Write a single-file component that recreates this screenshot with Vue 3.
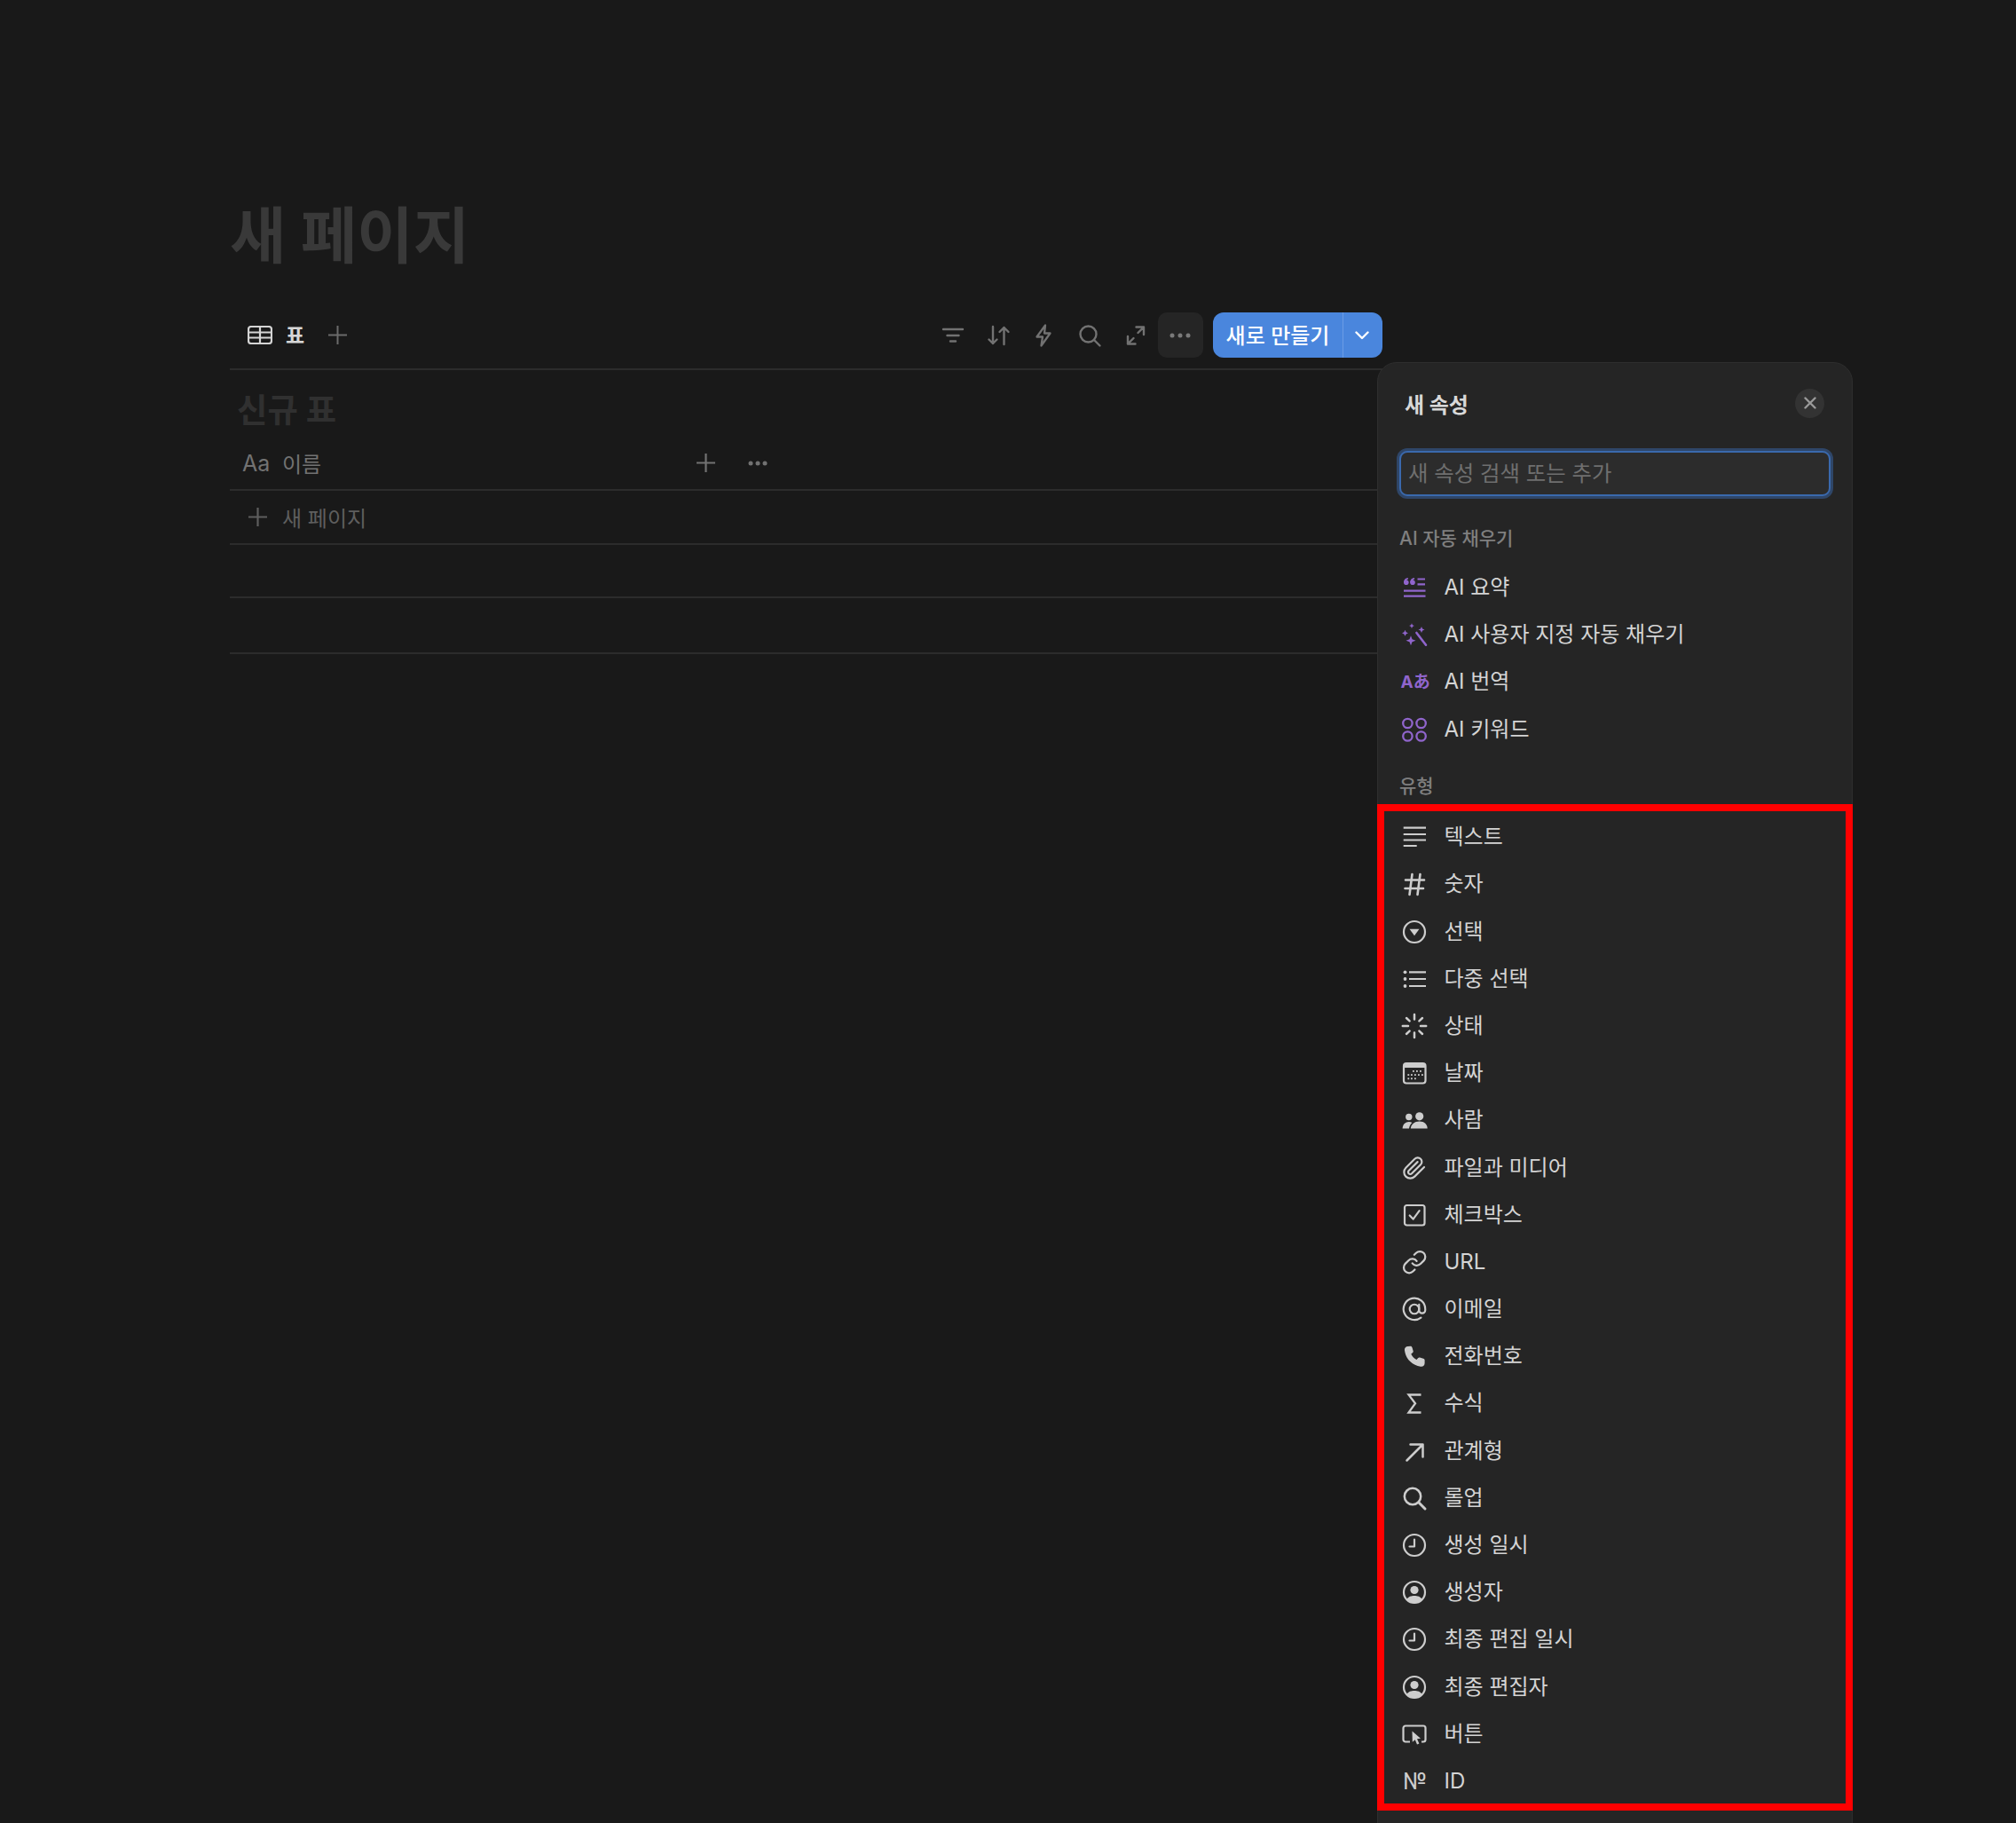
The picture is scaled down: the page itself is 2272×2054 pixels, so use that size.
<script setup>
const S = 'fill="none" stroke="currentColor" stroke-width="2.2" stroke-linecap="round" stroke-linejoin="round"'
const clock = `<g ${S}><circle cx="14" cy="14" r="12"/><path d="M14 7.5V15.5H8.5"/></g>`
const person = `<g fill="none" stroke="currentColor" stroke-width="2.2"><circle cx="14" cy="14" r="12"/></g><circle cx="14" cy="11.5" r="4.6" fill="currentColor"/><path d="M5 22.5C7 18.8 10.5 18 14 18s7 .8 9 4.5A12.5 12.5 0 0 1 5 22.5Z" fill="currentColor"/>`
const icons = {
  summary: `<g fill="currentColor"><circle cx="4.8" cy="8.2" r="2.8"/><circle cx="12" cy="8.2" r="2.8"/><path d="M2 8.200C2 5.200 3.800 3.300 6.800 3L7 4.600C5.400 5 4.800 6.300 4.800 8.200ZM9.200 8.200C9.200 5.200 11 3.300 14 3L14.200 4.600C12.600 5 12 6.300 12 8.200Z"/></g><path d="M17.500 4.500H26M17.500 10.300H26M2 17.700H26.500M2 23.700H26.500" fill="none" stroke="currentColor" stroke-width="2.200"/>`,
  wand: `<g fill="currentColor"><path d="M11 1.200l.9 2 2 .9-2 .9-.9 2-.9-2-2-.9 2-.9Z"/><path d="M22 5l1.100 2.400 2.400 1.100-2.400 1.100-1.100 2.400-1.100-2.400-2.400-1.100 2.400-1.100Z"/><path d="M3.500 8.800l1.100 2.400 2.400 1.100-2.400 1.100-1.100 2.400-1.100-2.400-2.400-1.100 2.400-1.100Z"/><path d="M10 15.200l1.500 4 4 1.500-4 1.500-1.500 4-1.500-4-4-1.500 4-1.500Z"/></g><path d="M16.400 12L27 25.700" fill="none" stroke="currentColor" stroke-width="2.600" stroke-linecap="round"/>`,
  translate: `<text x="-1.500" y="20.500" fill="currentColor" font-size="19" font-weight="700" font-family="Inter, 'Noto Sans CJK JP', sans-serif">Aあ</text>`,
  keywords: `<g fill="none" stroke="currentColor" stroke-width="2.300"><circle cx="6.400" cy="7" r="5.200"/><circle cx="21.600" cy="7" r="5.200"/><circle cx="6.400" cy="21.500" r="5.200"/><circle cx="21.600" cy="21.500" r="5.200"/></g>`,
  text: `<path d="M1.700 3.700H27M1.700 11H27M1.700 17.500H27M1.700 24H16.700" fill="none" stroke="currentColor" stroke-width="2.200"/>`,
  number: `<path d="M11.500 3L8.500 26M20.500 3L17.500 26M4 9.500H25M3.500 19H24" fill="none" stroke="currentColor" stroke-width="2.600" stroke-linecap="round"/>`,
  select: `<circle cx="14" cy="14" r="12" fill="none" stroke="currentColor" stroke-width="2.200"/><path d="M8.500 10.800H19.500L14 18.200Z" fill="currentColor"/>`,
  multi: `<g fill="currentColor"><circle cx="3.500" cy="6.300" r="1.900"/><circle cx="3.500" cy="14" r="1.900"/><circle cx="3.500" cy="22" r="1.900"/></g><path d="M8 6.300H27M8 14H27M8 22H27" fill="none" stroke="currentColor" stroke-width="2.200"/>`,
  status: `<path d="M14 1V6.500M14 21.500V27M.8 14H7M21 14H27.200M5 5L8.600 8.400M19.400 19.600L23 23M23 5L19.400 8.400M8.600 19.600L5 23" fill="none" stroke="currentColor" stroke-width="2.500" stroke-linecap="round"/>`,
  date: `<rect x="2" y="3" width="24.500" height="22.500" rx="3" fill="none" stroke="currentColor" stroke-width="2.200"/><path d="M4 3H24.500A2 2 0 0 1 26.500 5V8H2V5A2 2 0 0 1 4 3Z" fill="currentColor"/><g fill="currentColor"><rect x="12" y="11" width="1.800" height="1.800"/><rect x="16" y="11" width="1.800" height="1.800"/><rect x="20" y="11" width="1.800" height="1.800"/><rect x="6.400" y="15.200" width="1.800" height="1.800"/><rect x="10" y="15.200" width="1.800" height="1.800"/><rect x="14" y="15.200" width="1.800" height="1.800"/><rect x="18" y="15.200" width="1.800" height="1.800"/><rect x="22" y="15.200" width="1.800" height="1.800"/><rect x="6.400" y="19.400" width="1.800" height="1.800"/><rect x="10" y="19.400" width="1.800" height="1.800"/><rect x="14" y="19.400" width="1.800" height="1.800"/></g>`,
  people: `<g fill="currentColor"><circle cx="7.800" cy="10.500" r="3.700"/><circle cx="19.700" cy="9.800" r="4.600"/><path d="M.6 23.600C.8 18.800 4 16 7.800 16c1.500 0 2.700.3 3.700 1-2 1.600-3.200 3.900-3.500 6.600Z"/><path d="M9.800 23.600c.4-4.700 4.300-8 9.900-8s8.800 3.300 9 8Z"/></g>`,
  file: `<g transform="scale(1.167)"><path d="m21.440 11.050-9.190 9.190a6 6 0 0 1-8.490-8.490l8.570-8.570A4 4 0 1 1 18 8.840l-8.590 8.570a2 2 0 0 1-2.830-2.830l8.490-8.480" fill="none" stroke="currentColor" stroke-width="1.850" stroke-linecap="round" stroke-linejoin="round"/></g>`,
  check: `<rect x="3" y="3" width="22.500" height="22.500" rx="2.500" fill="none" stroke="currentColor" stroke-width="2.200"/><path d="M8.700 14.500L12.600 18.600L19.600 9.200" fill="none" stroke="currentColor" stroke-width="2.200" stroke-linecap="round" stroke-linejoin="round"/>`,
  link: `<g transform="translate(-.5 -.5) scale(1.220)"><path d="M10 13a5 5 0 0 0 7.540.54l3-3a5 5 0 0 0-7.070-7.070l-1.720 1.710M14 11a5 5 0 0 0-7.540-.54l-3 3a5 5 0 0 0 7.070 7.070l1.710-1.710" fill="none" stroke="currentColor" stroke-width="1.850" stroke-linecap="round" stroke-linejoin="round"/></g>`,
  email: `<g transform="translate(-.4 -.4) scale(1.200)"><circle cx="12" cy="12" r="4.400" fill="none" stroke="currentColor" stroke-width="1.800"/><path d="M16.400 7.600v5.400a2.900 2.900 0 0 0 5.800 0v-1a10.200 10.200 0 1 0-4 8" fill="none" stroke="currentColor" stroke-width="1.800" stroke-linecap="round"/></g>`,
  phone: `<path fill="currentColor" d="M6.500 3L9.600 2.800C10.600 2.800 11.200 3.400 11.500 4.300L12.600 8C12.900 9 12.600 9.700 11.900 10.300L10.300 11.600C11.500 14.500 13.500 16.600 16.500 18L18 16.200C18.600 15.500 19.400 15.300 20.100 15.500L24.100 16.700C25.100 17 25.600 17.700 25.600 18.600V22C25.600 24.600 23.500 26.200 21 25.700C11 24 4.200 17 3 7.500C2.600 5 4.200 3.200 6.500 3Z"/>`,
  formula: `<path d="M21.500 4.500H7.500L15 14.300L7.500 24.500H21.500" fill="none" stroke="currentColor" stroke-width="2.300" stroke-linejoin="miter"/>`,
  relation: `<path d="M5.500 24.500L23.500 6.500M9.500 6.500H23.500V20.500" fill="none" stroke="currentColor" stroke-width="2.500" stroke-linecap="round" stroke-linejoin="round"/>`,
  rollup: `<circle cx="12" cy="12" r="9.200" fill="none" stroke="currentColor" stroke-width="2.500"/><path d="M18.800 18.800L26 26" fill="none" stroke="currentColor" stroke-width="3" stroke-linecap="round"/>`,
  clock,
  person,
  button: `<path d="M9 22.500H4A2.500 2.500 0 0 1 1.500 20V7A2.500 2.500 0 0 1 4 4.500H24A2.500 2.500 0 0 1 26.500 7V20A2.500 2.500 0 0 1 24 22.500H22" fill="none" stroke="currentColor" stroke-width="2.200"/><path d="M11.500 10.500L21 18.800L17 19.200L19.400 24.500L17 25.600L14.800 20.200L11.800 22.800Z" fill="currentColor"/>`,
  id: `<text x="1" y="23" fill="currentColor" font-size="25" font-family="Inter, 'Noto Sans', sans-serif">№</text>`,
}
const aiItems = [
  { label: 'AI 요약', icon: 'summary' },
  { label: 'AI 사용자 지정 자동 채우기', icon: 'wand' },
  { label: 'AI 번역', icon: 'translate' },
  { label: 'AI 키워드', icon: 'keywords' },
]
const typeItems = [
  { label: '텍스트', icon: 'text' },
  { label: '숫자', icon: 'number' },
  { label: '선택', icon: 'select' },
  { label: '다중 선택', icon: 'multi' },
  { label: '상태', icon: 'status' },
  { label: '날짜', icon: 'date' },
  { label: '사람', icon: 'people' },
  { label: '파일과 미디어', icon: 'file' },
  { label: '체크박스', icon: 'check' },
  { label: 'URL', icon: 'link' },
  { label: '이메일', icon: 'email' },
  { label: '전화번호', icon: 'phone' },
  { label: '수식', icon: 'formula' },
  { label: '관계형', icon: 'relation' },
  { label: '롤업', icon: 'rollup' },
  { label: '생성 일시', icon: 'clock' },
  { label: '생성자', icon: 'person' },
  { label: '최종 편집 일시', icon: 'clock' },
  { label: '최종 편집자', icon: 'person' },
  { label: '버튼', icon: 'button' },
  { label: 'ID', icon: 'id' },
]
</script>

<template>
  <div class="page">
    <main class="content">
      <h1 class="title">새 페이지</h1>

      <div class="toolbar">
        <div class="tabs">
          <svg class="tab-icon" viewBox="0 0 28 21" fill="none" stroke="currentColor" stroke-width="2.200">
            <rect x="1" y="1" width="26" height="19" rx="3" />
            <path d="M1 7.500H27M1 13.500H27M14 1V20" />
          </svg>
          <span class="tab-label">표</span>
          <svg class="tab-plus" viewBox="0 0 21 21" fill="none" stroke="currentColor" stroke-width="2">
            <path d="M10.500 0V21M0 10.500H21" />
          </svg>
        </div>
        <div class="actions">
          <span class="action">
            <svg class="ico" viewBox="0 0 28 28" fill="none" stroke="currentColor" stroke-width="2.400" stroke-linecap="round">
              <path d="M3 7H25M7.500 14H20.500M11 20.500H17" />
            </svg>
          </span>
          <span class="action">
            <svg class="ico" viewBox="0 0 28 28" fill="none" stroke="currentColor" stroke-width="2.400" stroke-linecap="round" stroke-linejoin="round">
              <path d="M8 4V23M3.500 18.500L8 23L12.500 18.500M20.500 24V5M15.500 10L20.500 5L25.500 10" />
            </svg>
          </span>
          <span class="action">
            <svg class="ico" viewBox="0 0 28 28" fill="none" stroke="currentColor" stroke-width="2.300" stroke-linejoin="round">
              <path d="M16 2.500L6.500 15.500H13L11.500 25.500L21.500 11.500H15Z" />
            </svg>
          </span>
          <span class="action">
            <svg class="ico" viewBox="0 0 28 28" fill="none" stroke="currentColor" stroke-width="2.400" stroke-linecap="round">
              <circle cx="12.500" cy="12.500" r="9" />
              <path d="M19 19L25.500 25.500" />
            </svg>
          </span>
          <span class="action">
            <svg class="ico" viewBox="0 0 28 28" fill="none" stroke="currentColor" stroke-width="2.400" stroke-linecap="round" stroke-linejoin="round">
              <path d="M15.500 4.500H24V13M6 15V23.500H14.500M24 4.500L17.500 11M6 23.500L12.500 17" />
            </svg>
          </span>
          <span class="action action-more">
            <svg class="dots" viewBox="0 0 24 6" fill="currentColor">
              <circle cx="3" cy="3" r="2.500" />
              <circle cx="12" cy="3" r="2.500" />
              <circle cx="21" cy="3" r="2.500" />
            </svg>
          </span>
          <div class="new-button">
            <span class="new-label">새로 만들기</span>
            <span class="new-caret">
              <svg viewBox="0 0 16 10" fill="none" stroke="currentColor" stroke-width="2.400" stroke-linecap="round" stroke-linejoin="round">
                <path d="M1.500 1.500L8 8L14.500 1.500" />
              </svg>
            </span>
          </div>
        </div>
      </div>

      <div class="view-title">신규 표</div>

      <div class="row row-head">
        <span class="aa">Aa</span>
        <span class="col-name">이름</span>
        <svg class="col-plus" viewBox="0 0 21 21" fill="none" stroke="currentColor" stroke-width="2.200">
          <path d="M10.500 0V21M0 10.500H21" />
        </svg>
        <svg class="col-dots" viewBox="0 0 22 6" fill="currentColor">
          <circle cx="3" cy="3" r="2.500" />
          <circle cx="11" cy="3" r="2.500" />
          <circle cx="19" cy="3" r="2.500" />
        </svg>
      </div>
      <div class="row row-new">
        <svg class="new-plus" viewBox="0 0 21 21" fill="none" stroke="currentColor" stroke-width="2.200">
          <path d="M10.500 0V21M0 10.500H21" />
        </svg>
        <span>새 페이지</span>
      </div>
      <div class="row"></div>
      <div class="row row-last"></div>
    </main>

    <aside class="panel">
      <header class="panel-head">
        <span class="panel-title">새 속성</span>
        <span class="close">
          <svg viewBox="0 0 14 14" fill="none" stroke="currentColor" stroke-width="2.400" stroke-linecap="round">
            <path d="M1.500 1.500L12.500 12.500M12.500 1.500L1.500 12.500" />
          </svg>
        </span>
      </header>
      <div class="search">새 속성 검색 또는 추가</div>

      <div class="section ai-section">AI 자동 채우기</div>
      <ul class="list">
        <li v-for="item in aiItems" :key="item.label" class="item">
          <svg class="item-icon purple" viewBox="0 0 28 28" v-html="icons[item.icon]"></svg>
          <span>{{ item.label }}</span>
        </li>
      </ul>

      <div class="section type-section">유형</div>
      <ul class="list">
        <li v-for="item in typeItems" :key="item.label" class="item">
          <svg class="item-icon" viewBox="0 0 28 28" v-html="icons[item.icon]"></svg>
          <span>{{ item.label }}</span>
        </li>
      </ul>
    </aside>

    <div class="highlight"></div>
  </div>
</template>

<style scoped>
.page {
  position: relative;
  width: 2272px;
  height: 2054px;
  overflow: hidden;
  background: #191919;
  font-family: Inter, "Noto Sans CJK KR", sans-serif;
}
.content {
  box-sizing: border-box;
  width: 1560px;
  padding: 218px 0 0 259px;
}
.title {
  margin: 0;
  height: 134px;
  font-size: 69px;
  line-height: 96px;
  font-weight: 700;
  color: #393939;
}
.toolbar {
  display: flex;
  align-items: center;
  justify-content: space-between;
  box-sizing: border-box;
  height: 64.600px;
  padding: 0 2px 11px 20px;
  border-bottom: 2px solid #2c2c2c;
}
.tabs {
  display: flex;
  align-items: center;
  color: #d4d4d4;
}
.tab-icon {
  width: 28px;
  height: 21px;
}
.tab-label {
  margin-left: 15px;
  font-size: 23px;
  font-weight: 700;
  line-height: 28px;
  color: #d6d6d6;
}
.tab-plus {
  width: 21px;
  height: 21px;
  margin-left: 27px;
  color: #6b6b6b;
}
.actions {
  display: flex;
  align-items: center;
  color: #727272;
}
.action {
  display: flex;
  align-items: center;
  justify-content: center;
  width: 51.300px;
  height: 51px;
}
.ico {
  width: 28px;
  height: 28px;
}
.action-more {
  background: #252525;
  border-radius: 10px;
  margin-right: 11px;
  color: #7a7a7a;
}
.dots {
  width: 24px;
  height: 6px;
}
.new-button {
  display: flex;
  align-items: stretch;
  width: 191px;
  height: 51px;
  border-radius: 12px;
  background: #4a86dd;
  color: #fff;
}
.new-label {
  display: flex;
  align-items: center;
  justify-content: center;
  width: 147px;
  padding-bottom: 2px;
  box-sizing: border-box;
  font-size: 24px;
  font-weight: 500;
  border-right: 1px solid #6c9de5;
}
.new-caret {
  display: flex;
  flex: 1;
  align-items: center;
  justify-content: center;
  padding-right: 3px;
}
.new-caret svg {
  width: 16px;
  height: 10px;
}
.view-title {
  box-sizing: border-box;
  height: 76px;
  padding: 26px 0 10px 8px;
  font-size: 37.400px;
  line-height: 40px;
  font-weight: 700;
  color: #303030;
}
.row {
  box-sizing: border-box;
  display: flex;
  align-items: center;
  height: 60.500px;
  border-bottom: 2px solid #2c2c2c;
}
.row-last {
  height: 63px;
}
.row-head {
  color: #727272;
  font-size: 24px;
  padding-left: 14px;
}
.aa {
  width: 45px;
  font-size: 25px;
}
.col-name {
  width: 467px;
}
.col-plus {
  width: 21px;
  height: 21px;
}
.col-dots {
  width: 22px;
  height: 6px;
  margin-left: 37px;
}
.row-new {
  color: #5e5e5e;
  font-size: 24px;
  padding-left: 21px;
}
.new-plus {
  width: 21px;
  height: 21px;
  margin-right: 17px;
}
.panel {
  position: absolute;
  left: 1552px;
  top: 408px;
  box-sizing: border-box;
  width: 536px;
  height: 1700px;
  border: 1px solid #2e2e2e;
  border-radius: 22px;
  background: #252525;
  color: #d4d4d4;
  padding: 0 24px;
}
.panel-head {
  display: flex;
  align-items: center;
  justify-content: space-between;
  height: 90px;
  padding: 0 7px 0 6px;
}
.panel-title {
  font-size: 24px;
  font-weight: 700;
  color: #d8d8d8;
}
.close {
  display: flex;
  align-items: center;
  justify-content: center;
  width: 33px;
  height: 33px;
  border-radius: 50%;
  background: #333333;
  color: #9a9a9a;
}
.close svg {
  width: 14px;
  height: 14px;
}
.search {
  box-sizing: border-box;
  height: 51px;
  margin-top: 9px;
  padding-left: 8px;
  border: 2px solid #3a69ad;
  border-radius: 9px;
  background: #2c2c2c;
  box-shadow: 0 0 0 3px #2f4668;
  color: #6f6f6f;
  font-size: 24.400px;
  line-height: 47px;
}
.section {
  height: 36px;
  font-size: 21px;
  line-height: 36px;
  font-weight: 500;
  color: #7f7f7f;
}
.ai-section {
  margin: 30px 0 10.500px;
}
.type-section {
  margin: 20px 0 12.400px;
}
.list {
  list-style: none;
  margin: 0;
  padding: 0;
}
.item {
  display: flex;
  align-items: center;
  height: 53.200px;
  padding-left: 3px;
  font-size: 24px;
  line-height: 30px;
}
.item-icon {
  flex: none;
  width: 28px;
  height: 28px;
  margin-right: 19.500px;
  overflow: visible;
  color: #cdcdcd;
}
.purple {
  color: #9065cc;
}
.highlight {
  position: absolute;
  left: 1552px;
  top: 906px;
  box-sizing: border-box;
  width: 536px;
  height: 1134px;
  border: 8px solid #ff0000;
}
</style>
